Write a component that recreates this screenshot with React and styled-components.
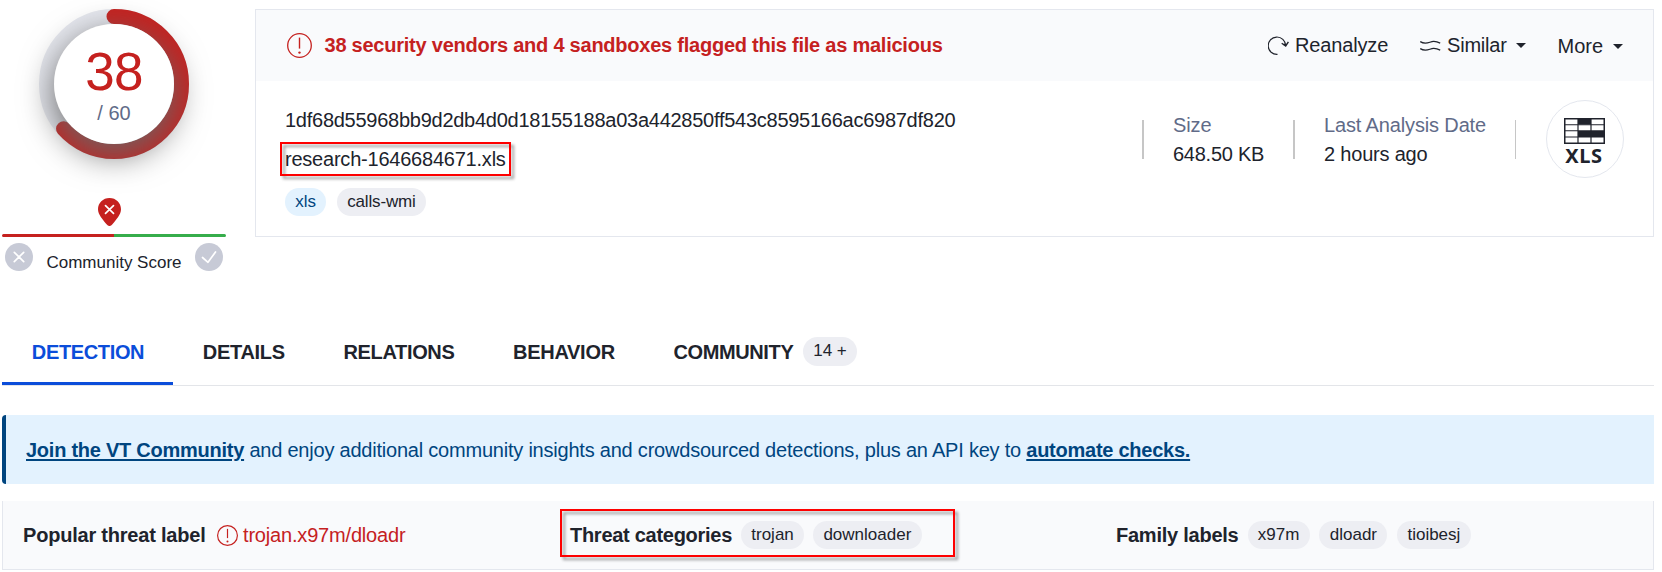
import React from 'react';
import styled, { createGlobalStyle } from 'styled-components';

const ink = '#20232c';
const red = '#c5211f';
const slate = '#616b88';
const navy = '#00457f';
const line = '#e4e7ee';
const panel = '#f9fafc';

const GlobalStyle = createGlobalStyle`
  * { box-sizing: border-box; }
  body {
    margin: 0;
    background: #fff;
    color: ${ink};
    font: 20px/24px 'Liberation Sans', Arial, sans-serif;
    overflow: hidden;
  }
  svg { display: block; flex: none; }
`;

const Page = styled.main`
  padding: 9px 8px 0 2px;
`;

const Text = styled.span`
  white-space: nowrap;
  letter-spacing: ${(p) => p.$track || 0}px;
  font-weight: ${(p) => (p.$bold ? 700 : 400)};
  color: ${(p) => p.$color || 'inherit'};
`;

const Summary = styled.section`
  display: flex;
  align-items: flex-start;
  gap: 29px;
`;

/* Score column */
const ScoreColumn = styled.aside`
  width: 224px;
  flex: none;
  display: flex;
  flex-direction: column;
`;

const Gauge = styled.div`
  position: relative;
  width: 150px;
  height: 150px;
  margin-left: 37px;
`;

const GaugeFace = styled.div`
  position: absolute;
  inset: 15px;
  border-radius: 50%;
  background: #fff;
  box-shadow: 0 10px 34px rgb(104, 104, 104);
  display: flex;
  flex-direction: column;
  align-items: center;
`;

const Positives = styled.div`
  margin-top: 21px;
  font-size: 53px;
  line-height: 54px;
  letter-spacing: -0.8px;
  color: ${red};
`;

const Total = styled.div`
  margin-top: 2px;
  color: ${slate};
`;

const Pin = styled.svg`
  margin: 39px 0 0 96px;
`;

const VoteBar = styled.div`
  display: flex;
  height: 3px;
  margin-top: 8px;
  border-radius: 2px;
  overflow: hidden;
`;

const VoteShare = styled.div`
  flex: 1;
  background: ${(p) => p.$color};
`;

const VoteRow = styled.div`
  display: flex;
  justify-content: space-between;
  align-items: center;
  height: 28px;
  padding: 0 3px;
  margin-top: 6px;
`;

const VoteLabel = styled.span`
  font-size: 17px;
  padding-top: 12px;
  line-height: 18px;
`;

/* File card */
const Card = styled.article`
  flex: 1;
  height: 228px;
  border: 1px solid ${line};
`;

const CardHeader = styled.header`
  display: flex;
  align-items: center;
  height: 71px;
  padding: 0 30px 0 31px;
  background: ${panel};
`;

const Verdict = styled.div`
  display: flex;
  align-items: center;
  gap: 12.5px;
  margin-right: auto;

  ${Text} {
    padding-bottom: 1px;
  }
`;

const Action = styled.div`
  display: flex;
  align-items: center;
  width: ${(p) => p.$width}px;
  margin-left: 31px;
  padding-top: ${(p) => p.$drop || 0}px;
`;

const ActionLabel = styled(Text)`
  margin-left: ${(p) => p.$gap || 0}px;
  padding-bottom: 1px;
`;

const Caret = styled.i`
  width: 0;
  margin-left: auto;
  border: 5px solid transparent;
  border-top-color: ${ink};
  border-bottom: 0;
`;

const CardBody = styled.div`
  display: flex;
  align-items: flex-start;
  padding: 0 29px;
`;

const Identity = styled.div`
  display: flex;
  flex-direction: column;
  align-items: flex-start;
  padding-top: 27px;
  margin-right: auto;
`;

const FileName = styled.div`
  position: relative;
  margin: 15px 0 17px;
`;

const Highlight = styled.div`
  position: absolute;
  top: ${(p) => p.$top}px;
  left: ${(p) => p.$left}px;
  width: ${(p) => p.$width}px;
  height: ${(p) => p.$height}px;
  border: 2px solid #fe0000;
  filter: drop-shadow(3px 3px 1.5px rgba(0, 0, 0, 0.4));
`;

const Chips = styled.div`
  display: flex;
  gap: ${(p) => p.$gap || 9}px;
`;

const Chip = styled.span`
  height: ${(p) => p.$height || 28}px;
  padding: 0 10.3px;
  border-radius: 15px;
  background: ${(p) => (p.$blue ? '#e3f2fe' : '#edeef3')};
  color: ${(p) => (p.$blue ? navy : ink)};
  font-size: 17px;
  font-weight: 400;
  line-height: ${(p) => p.$line || 27}px;
  letter-spacing: ${(p) => p.$track || 0}px;
  white-space: nowrap;
`;

const Meta = styled.div`
  display: flex;
  align-items: center;
  height: 78px;
  margin-top: 19px;
`;

const Rule = styled.div`
  width: ${(p) => p.$width || 2}px;
  height: 39px;
  margin: 1px 29px 0;
  background: #c6c6c6;
`;

const Fact = styled.div`
  display: flex;
  flex-direction: column;
  width: ${(p) => p.$width}px;
  padding-top: 1px;
  line-height: 29px;
`;

const FileType = styled.div`
  width: 78px;
  height: 78px;
  margin-left: 1px;
  padding: 17px 2px 0 0;
  border: 1px solid ${line};
  border-radius: 50%;
  display: flex;
  flex-direction: column;
  align-items: center;
`;

const FileTypeName = styled.span`
  font: 700 20px/24px 'Noto Sans', 'Open Sans', sans-serif;
  letter-spacing: 0.6px;
`;

/* Tabs */
const Tabs = styled.nav`
  display: flex;
  height: 68px;
  margin-top: 47px;
  border-bottom: 1px solid #e3e5e9;
`;

const Tab = styled.a`
  display: flex;
  align-items: center;
  gap: 9.5px;
  padding: 0 28.8px 0 29.8px;
  color: ${(p) => (p.$active ? '#0b4dda' : ink)};
  box-shadow: ${(p) => (p.$active ? 'inset 0 -3px #0b4dda' : 'none')};
`;

/* Join banner */
const Banner = styled.div`
  display: flex;
  align-items: center;
  gap: 5.3px;
  height: 69px;
  margin-top: 29px;
  padding-left: 20px;
  border-left: 4px solid ${navy};
  border-radius: 4px 0 0 4px;
  background: #e3f2fe;
  color: ${navy};
`;

const BannerLink = styled(Text)`
  text-decoration: underline;
  text-decoration-thickness: 2px;
  text-underline-offset: 2px;
`;

/* Threat summary */
const Threats = styled.section`
  display: grid;
  grid-template-columns: 547px 546px 1fr;
  align-items: center;
  height: 69px;
  margin-top: 17px;
  padding-left: 20px;
  border: solid ${line};
  border-width: 0 1px 1px;
  background: ${panel};
`;

const ThreatGroup = styled.div`
  position: relative;
  display: flex;
  align-items: center;
  gap: 9px;
`;

const ThreatName = styled.span`
  display: flex;
  align-items: center;
  gap: 5.5px;
  margin-left: 2px;
`;

function AlertIcon({ size }) {
  return (
    <svg width={size} height={size} viewBox="0 0 25 25" fill="none" stroke={red}>
      <circle cx="12.5" cy="12.5" r="11.8" strokeWidth={size > 22 ? 1.3 : 1.4} />
      <path d="M12.5 4.6v11" strokeWidth="1.4" />
      <circle cx="12.5" cy="19.6" r="1.2" fill={red} stroke="none" />
    </svg>
  );
}

function ScoreRing({ value, total }) {
  const r = 67.5;
  const length = 2 * Math.PI * r;
  return (
    <svg width="150" height="150" viewBox="0 0 150 150" fill="none" strokeWidth="15">
      <circle cx="75" cy="75" r={r} stroke="#e6e8ef" />
      <circle
        cx="75"
        cy="75"
        r={r}
        stroke={red}
        strokeLinecap="round"
        strokeDasharray={`${(length * value) / total} ${length}`}
        transform="rotate(-90 75 75)"
      />
    </svg>
  );
}

function VoteIcon({ d }) {
  return (
    <svg width="28" height="28" viewBox="0 0 28 28" fill="none">
      <circle cx="14" cy="14" r="14" fill="#c7cad6" />
      <path d={d} stroke="#fff" strokeWidth="1.7" strokeLinecap="round" strokeLinejoin="round" />
    </svg>
  );
}

function SheetIcon() {
  return (
    <svg width="41" height="26" viewBox="0 0 41 26" fill="none" stroke={ink}>
      <path d="M14 1h13v5.5H14zM14 13h26v6H14z" fill={ink} stroke="none" />
      <path d="M.75 .75h39.5v24.5H.75z" strokeWidth="1.5" />
      <path d="M1 6.7h39M1 12.8h39M1 19h39" strokeWidth="1.1" />
      <path d="M14 1v24M27 1v24" strokeWidth="1.2" />
    </svg>
  );
}

export default function App() {
  return (
    <>
      <GlobalStyle />
      <Page>
        <Summary>
          <ScoreColumn>
            <Gauge>
              <ScoreRing value={38} total={60} />
              <GaugeFace>
                <Positives>38</Positives>
                <Total>/ 60</Total>
              </GaugeFace>
            </Gauge>
            <Pin width="23" height="28" viewBox="0 0 23 28" fill="none">
              <path
                d="M11.5 0C5 0 0 4.9 0 11.2c0 5.4 4.6 10 8.800 15.400 1.500 1.900 3.900 1.900 5.400 0C18.400 21.200 23 16.600 23 11.200 23 4.900 18 0 11.500 0z"
                fill={red}
              />
              <path d="M7.500 7.700l8 7.600M15.500 7.700l-8 7.600" stroke="#fff" strokeWidth="1.7" strokeLinecap="round" />
            </Pin>
            <VoteBar>
              <VoteShare $color={red} />
              <VoteShare $color="#36ad4b" />
            </VoteBar>
            <VoteRow>
              <VoteIcon d="M9.300 9.300l9.400 9.400M18.700 9.300l-9.400 9.400" />
              <VoteLabel>Community Score</VoteLabel>
              <VoteIcon d="M7.500 14.500l5.500 4.800 7.500-10.300" />
            </VoteRow>
          </ScoreColumn>

          <Card>
            <CardHeader>
              <Verdict>
                <AlertIcon size={25} />
                <Text $bold $color={red} $track={-0.235}>
                  38 security vendors and 4 sandboxes flagged this file as malicious
                </Text>
              </Verdict>
              <Action $width={121}>
                <svg width="21" height="20" viewBox="0 0 21 20" fill="none" stroke={ink} strokeWidth="1.2">
                  <path d="M9.500 18.400A8.700 8.700 0 1 1 17.600 9.500" />
                  <path d="M13.700 7.200l4 2.800 2.700-4.200M15 8.600l4-.3" strokeWidth="1.4" />
                </svg>
                <ActionLabel $gap={6} $track={-0.15}>Reanalyze</ActionLabel>
              </Action>
              <Action $width={106}>
                <svg width="21" height="12" viewBox="0 0 21 12" fill="none" stroke={ink} strokeWidth="1.2">
                  <path d="M.2 1.600C6 5.400 9.500 1.600 13.500 1.400c2.500-.1 4.500.6 6.700 1.700M.2 8.600c5.800 3.800 9.300 0 13.300-.2 2.500-.1 4.500.6 6.700 1.700" />
                </svg>
                <ActionLabel $gap={6} $track={-0.2}>Similar</ActionLabel>
                <Caret />
              </Action>
              <Action $width={66} $drop={2}>
                <ActionLabel $gap={0.5}>More</ActionLabel>
                <Caret />
              </Action>
            </CardHeader>

            <CardBody>
              <Identity>
                <Text $track={-0.26}>1df68d55968bb9d2db4d0d18155188a03a442850ff543c8595166ac6987df820</Text>
                <FileName>
                  <Text $track={-0.22}>research-1646684671.xls</Text>
                  <Highlight $top={-5} $left={-5} $width={231} $height={34} />
                </FileName>
                <Chips $gap={10.5}>
                  <Chip $blue $line={28}>xls</Chip>
                  <Chip $line={28} $track={-0.15}>calls-wmi</Chip>
                </Chips>
              </Identity>
              <Meta>
                <Rule />
                <Fact $width={91}>
                  <Text $color={slate} $track={-0.1}>Size</Text>
                  <Text $track={-0.25}>648.50 KB</Text>
                </Fact>
                <Rule />
                <Fact $width={162}>
                  <Text $color={slate} $track={-0.14}>Last Analysis Date</Text>
                  <Text $track={-0.2}>2 hours ago</Text>
                </Fact>
                <Rule $width={1} />
                <FileType>
                  <SheetIcon />
                  <FileTypeName>XLS</FileTypeName>
                </FileType>
              </Meta>
            </CardBody>
          </Card>
        </Summary>

        <Tabs>
          <Tab $active><Text $bold $track={-0.35}>DETECTION</Text></Tab>
          <Tab><Text $bold $track={-0.3}>DETAILS</Text></Tab>
          <Tab><Text $bold $track={-0.33}>RELATIONS</Text></Tab>
          <Tab><Text $bold $track={-0.3}>BEHAVIOR</Text></Tab>
          <Tab>
            <Text $bold $track={-0.37}>COMMUNITY</Text>
            <Chip $height={29} $line={28}>14 +</Chip>
          </Tab>
        </Tabs>

        <Banner>
          <BannerLink $bold $track={-0.25}>Join the VT Community</BannerLink>
          <Text $track={-0.217}>
            and enjoy additional community insights and crowdsourced detections, plus an API key to
          </Text>
          <BannerLink $bold $track={-0.25}>automate checks.</BannerLink>
        </Banner>

        <Threats>
          <ThreatGroup>
            <Text $bold $track={-0.21}>Popular threat label</Text>
            <ThreatName>
              <AlertIcon size={21} />
              <Text $color={red} $track={-0.18}>trojan.x97m/dloadr</Text>
            </ThreatName>
          </ThreatGroup>
          <ThreatGroup>
            <Text $bold $track={-0.28}>Threat categories</Text>
            <Chips>
              <Chip>trojan</Chip>
              <Chip>downloader</Chip>
            </Chips>
            <Highlight $top={-12} $left={-10} $width={395} $height={48} />
          </ThreatGroup>
          <ThreatGroup>
            <Text $bold $track={-0.24}>Family labels</Text>
            <Chips $gap={9.8}>
              <Chip>x97m</Chip>
              <Chip>dloadr</Chip>
              <Chip>tioibesj</Chip>
            </Chips>
          </ThreatGroup>
        </Threats>
      </Page>
    </>
  );
}
